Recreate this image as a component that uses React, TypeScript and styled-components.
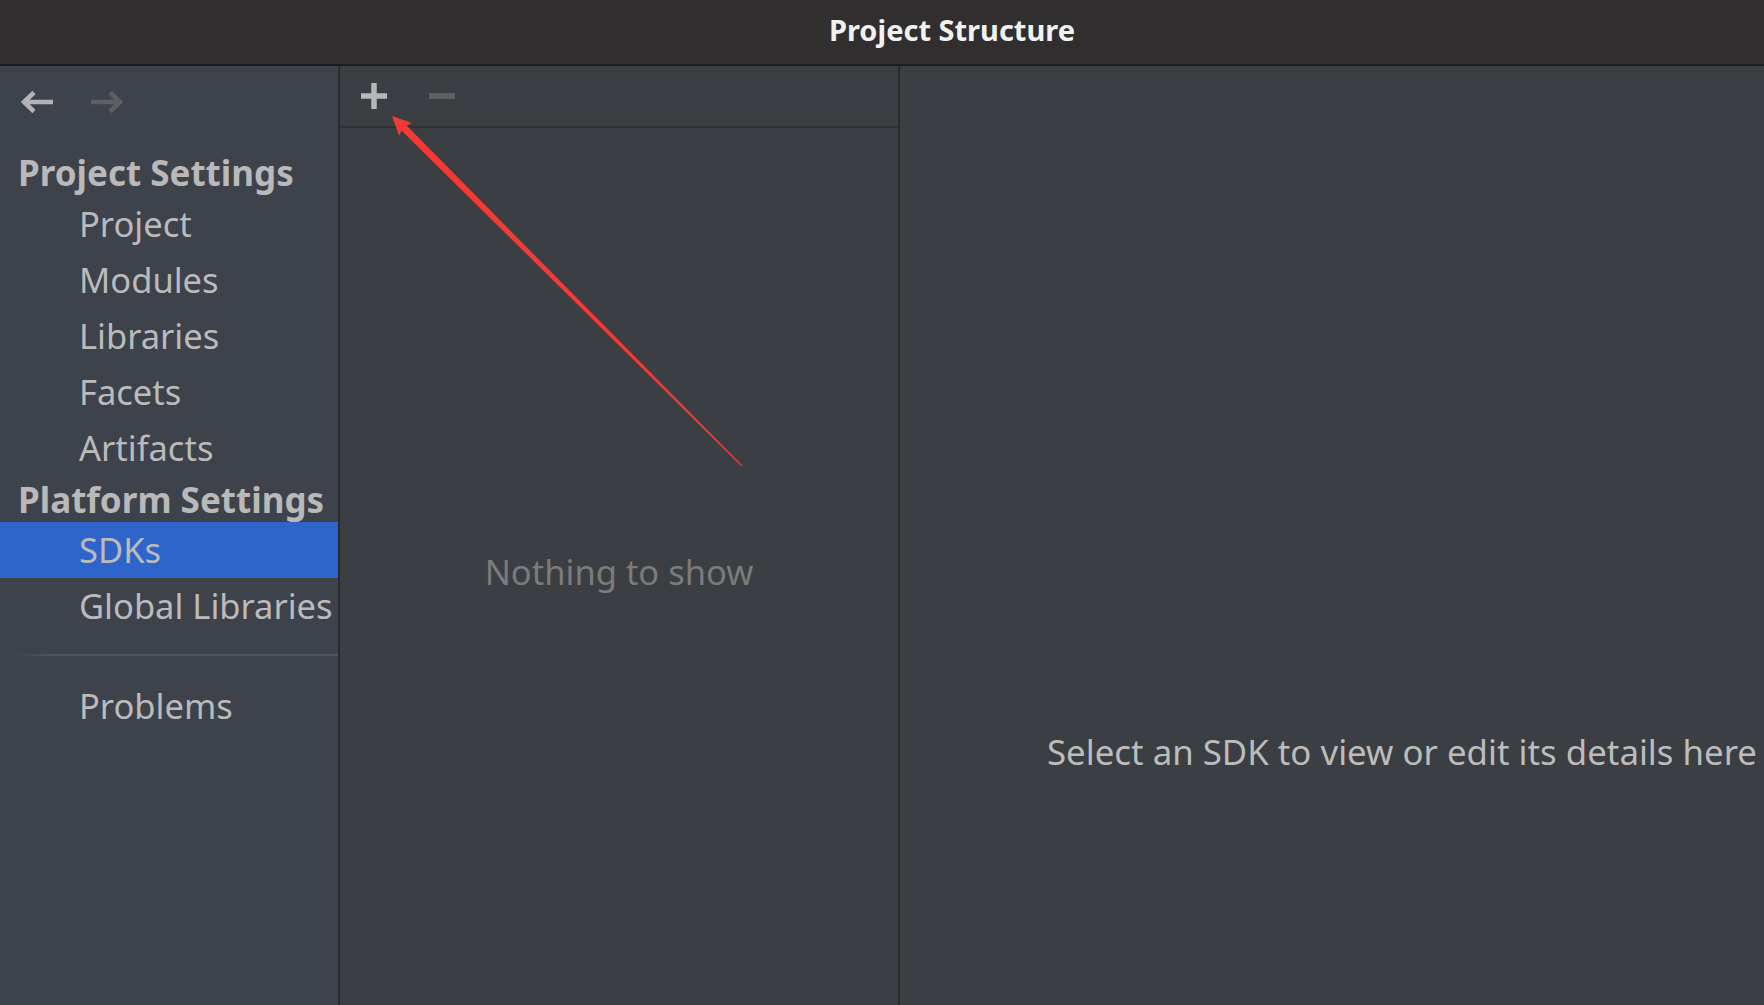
import React from "react";
import styled, { createGlobalStyle } from "styled-components";

const GlobalStyle = createGlobalStyle`
  html, body {
    margin: 0;
    padding: 0;
    overflow: hidden;
    background: #3b3e42;
  }
  * {
    box-sizing: border-box;
  }
`;

type Entry =
  | { kind: "header"; label: string; h: number }
  | { kind: "item"; label: string; selected?: boolean }
  | { kind: "separator" };

const entries: Entry[] = [
  { kind: "header", label: "Project Settings", h: 48 },
  { kind: "item", label: "Project" },
  { kind: "item", label: "Modules" },
  { kind: "item", label: "Libraries" },
  { kind: "item", label: "Facets" },
  { kind: "item", label: "Artifacts" },
  { kind: "header", label: "Platform Settings", h: 46 },
  { kind: "item", label: "SDKs", selected: true },
  { kind: "item", label: "Global Libraries" },
  { kind: "separator" },
  { kind: "item", label: "Problems" },
];

const ArrowIcon = ({ dir, dim }: { dir: "left" | "right"; dim?: boolean }) => (
  <svg
    width="34"
    height="24"
    viewBox="0 0 34 24"
    style={{ transform: dir === "right" ? "scaleX(-1)" : undefined }}
  >
    <path
      d="M33 12 H4 M14 2.5 L4 12 L14 21.5"
      fill="none"
      stroke={dim ? "#5e5f62" : "#b3b3b3"}
      strokeWidth="4.5"
    />
  </svg>
);

const PlusIcon = () => (
  <svg width="26" height="26" viewBox="0 0 26 26">
    <path d="M13 0 V26 M0 13 H26" stroke="#b8b8b8" strokeWidth="5.5" />
  </svg>
);

const MinusIcon = () => (
  <svg width="26" height="26" viewBox="0 0 26 26">
    <path d="M0 13 H26" stroke="#5d5f61" strokeWidth="6" />
  </svg>
);

// red annotation arrow pointing at the add button
const Annotation = () => {
  const tip = [392, 116];
  const tail = [742, 466];
  const len = Math.hypot(tail[0] - tip[0], tail[1] - tip[1]);
  const d = [(tail[0] - tip[0]) / len, (tail[1] - tip[1]) / len];
  const n = [d[1], -d[0]];
  const at = (dist: number, side: number) => [
    tip[0] + d[0] * dist + n[0] * side,
    tip[1] + d[1] * dist + n[1] * side,
  ];
  const pts = [
    tip,
    at(19, 9),
    at(17, 3.6),
    at(len, 0.6),
    at(len, -0.6),
    at(17, -3.6),
    at(19, -9),
  ]
    .map((p) => `${p[0].toFixed(1)},${p[1].toFixed(1)}`)
    .join(" ");
  return (
    <Overlay width="1764" height="1005" viewBox="0 0 1764 1005">
      <polygon points={pts} fill="#f43a33" />
    </Overlay>
  );
};

const App = () => {
  return (
    <Window>
      <GlobalStyle />
      <TitleBar>
        <Title>Project Structure</Title>
      </TitleBar>
      <Body>
        <Sidebar>
          <NavBar>
            <ArrowIcon dir="left" />
            <ArrowIcon dir="right" dim />
          </NavBar>
          {entries.map((e, i) => {
            if (e.kind === "header")
              return (
                <GroupHeader key={i} h={e.h}>
                  {e.label}
                </GroupHeader>
              );
            if (e.kind === "separator")
              return (
                <SeparatorRow key={i}>
                  <Line />
                </SeparatorRow>
              );
            return (
              <NavItem key={i} selected={e.selected}>
                {e.label}
              </NavItem>
            );
          })}
        </Sidebar>
        <ListPanel>
          <Toolbar>
            <ToolButton>
              <PlusIcon />
            </ToolButton>
            <ToolButton>
              <MinusIcon />
            </ToolButton>
          </Toolbar>
          <EmptyText>Nothing to show</EmptyText>
        </ListPanel>
        <DetailsPanel>
          <DetailsText>Select an SDK to view or edit its details here</DetailsText>
        </DetailsPanel>
      </Body>
      <Annotation />
    </Window>
  );
};

export default App;

const font = `"Noto Sans", "Open Sans", "DejaVu Sans", sans-serif`;

const Window = styled.div`
  position: relative;
  width: 1904px;
  height: 1005px;
  display: flex;
  flex-direction: column;
  font-family: ${font};
  background: #3b3e42;
`;

const TitleBar = styled.div`
  height: 66px;
  flex-shrink: 0;
  display: flex;
  align-items: center;
  justify-content: center;
  background: #302e2f;
  border-bottom: 2px solid #1d1d1d;
  padding-bottom: 5px;
`;

const Title = styled.div`
  color: #f2f2f2;
  font-size: 29px;
  font-weight: 700;
  line-height: 36px;
`;

const Body = styled.div`
  flex: 1;
  display: flex;
  min-height: 0;
`;

const Sidebar = styled.div`
  width: 340px;
  flex-shrink: 0;
  background: #3e424b;
  border-right: 2px solid #2b2b2d;
  display: flex;
  flex-direction: column;
`;

const NavBar = styled.div`
  height: 82px;
  display: flex;
  align-items: flex-start;
  gap: 36px;
  padding: 24px 0 0 20px;
`;

const GroupHeader = styled.div<{ h: number }>`
  height: ${(p) => p.h}px;
  display: flex;
  align-items: center;
  padding-left: 18px;
  color: #b9b9b9;
  font-size: 35px;
  font-weight: 700;
  white-space: nowrap;
`;

const NavItem = styled.div<{ selected?: boolean }>`
  height: 56px;
  display: flex;
  align-items: center;
  padding-left: 79px;
  padding-bottom: 2px;
  color: #bbbbbb;
  font-size: 34.5px;
  white-space: nowrap;
  background: ${(p) => (p.selected ? "#2f65ca" : "transparent")};
`;

const SeparatorRow = styled.div`
  height: 44px;
  padding: 20px 0 0 14px;
`;

const Line = styled.div`
  height: 2px;
  background: linear-gradient(to right, #3e424b, #52555b 40px, #52555b);
`;

const ListPanel = styled.div`
  width: 560px;
  flex-shrink: 0;
  border-right: 2px solid #2b2b2d;
  display: flex;
  flex-direction: column;
`;

const Toolbar = styled.div`
  height: 62px;
  flex-shrink: 0;
  display: flex;
  align-items: center;
  gap: 42px;
  padding-left: 21px;
  border-bottom: 2px solid #2f3133;
`;

const ToolButton = styled.div`
  width: 26px;
  height: 26px;
  display: flex;
`;

const EmptyText = styled.div`
  padding-top: 424px;
  line-height: 40px;
  text-align: center;
  color: #7b7b7b;
  font-size: 34.5px;
`;

const DetailsPanel = styled.div`
  flex: 1;
  display: flex;
  justify-content: center;
  padding-top: 666px;
`;

const DetailsText = styled.div`
  line-height: 40px;
  height: 40px;
  color: #bcbcbc;
  font-size: 34.8px;
  white-space: nowrap;
`;

const Overlay = styled.svg`
  position: absolute;
  left: 0;
  top: 0;
  pointer-events: none;
`;
